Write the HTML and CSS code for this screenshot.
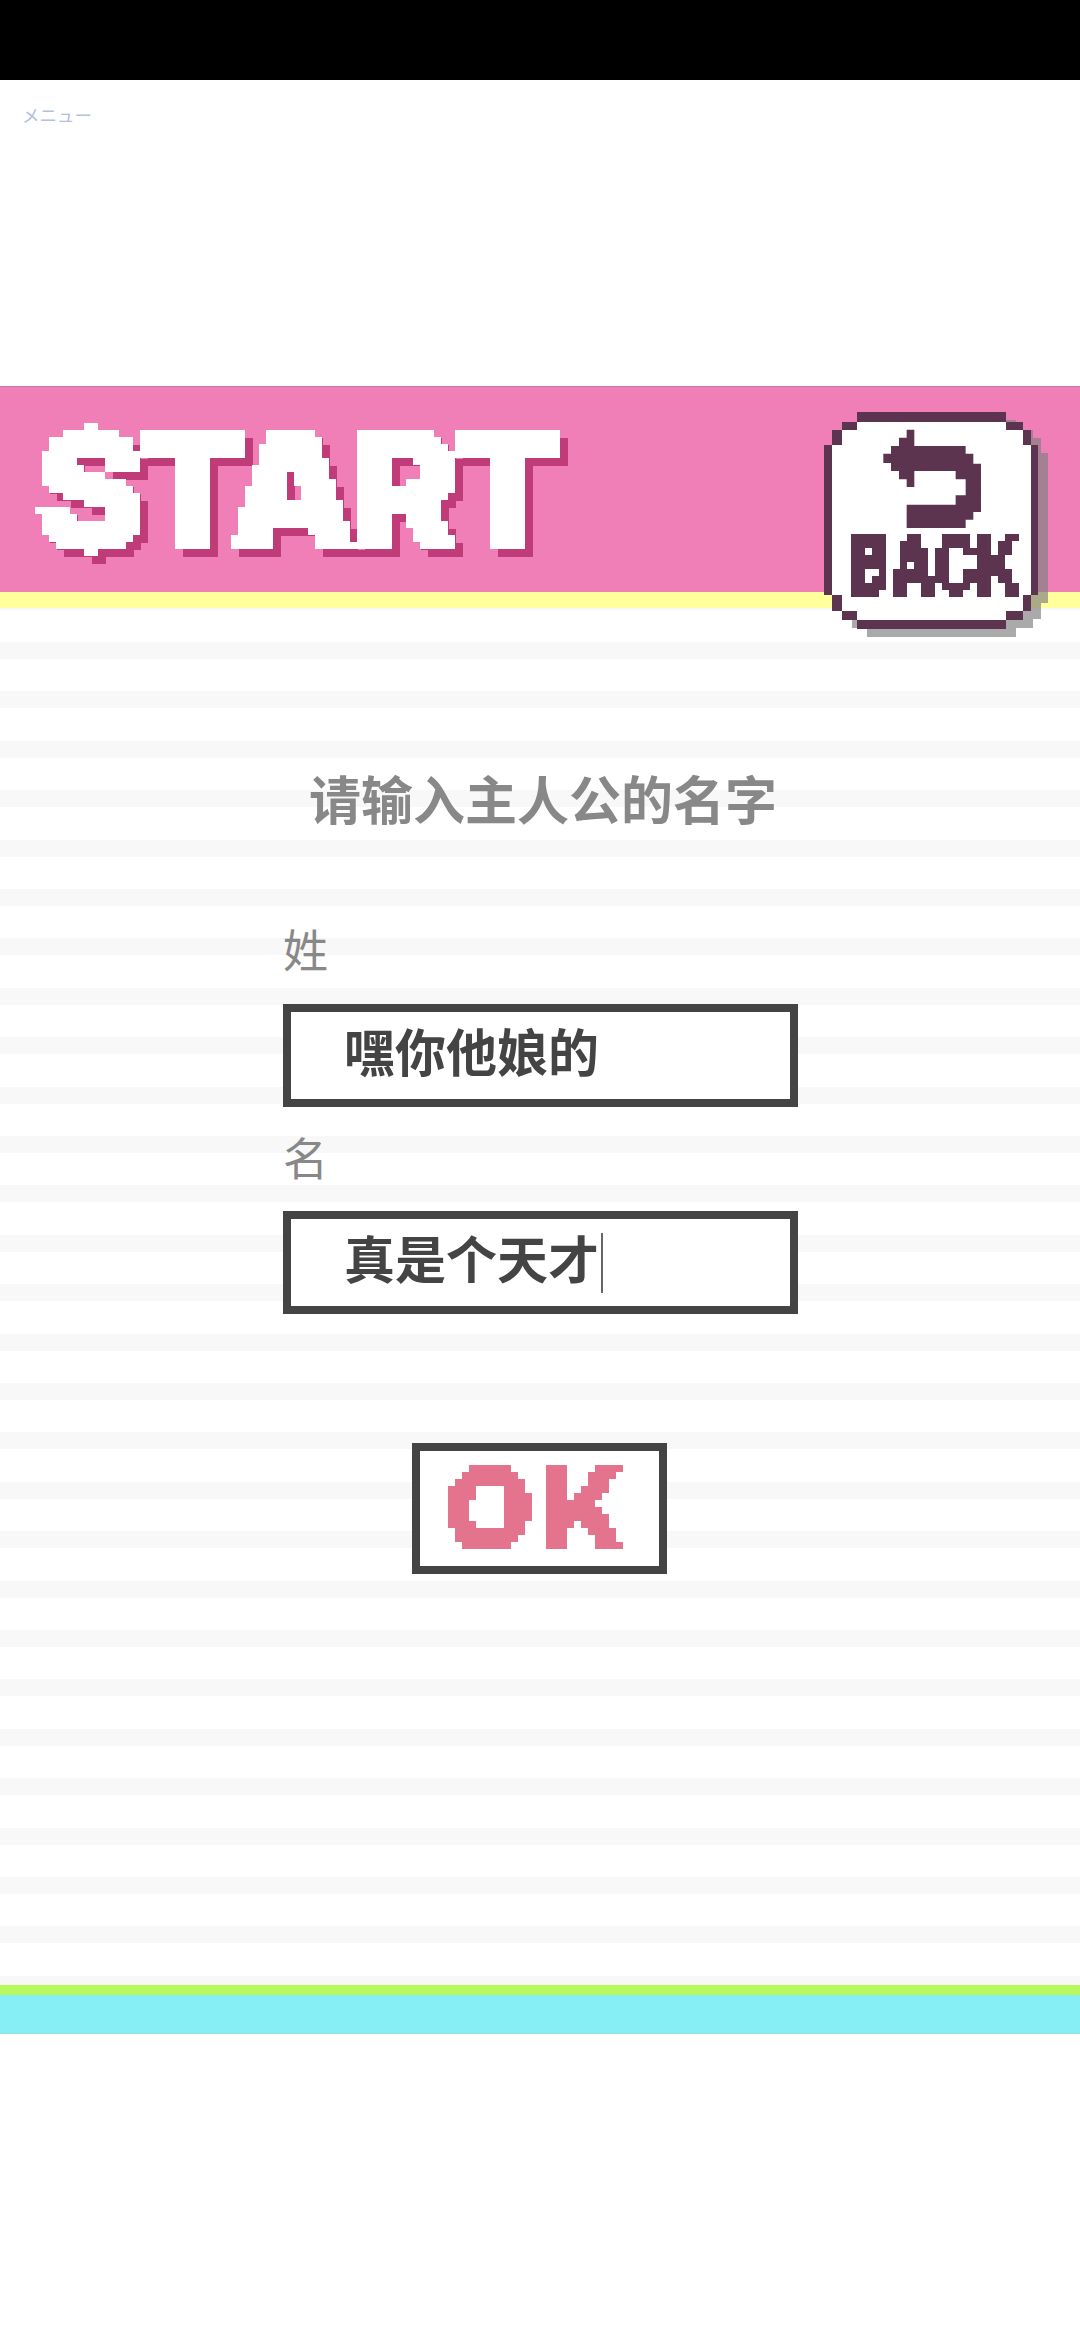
FILE: index.html
```html
<!DOCTYPE html>
<html lang="zh-CN">
<head>
  <meta charset="UTF-8">
  <meta name="viewport" content="width=device-width, initial-scale=1.0">
  <title>START</title>
  <link rel="stylesheet" href="styles.css">
</head>
<body>
  <svg class="filters" width="0" height="0" aria-hidden="true">
    <filter id="pixel7" x="0" y="0" width="100%" height="100%" color-interpolation-filters="sRGB">
      <feFlood x="3" y="3" width="1" height="1"/>
      <feComposite width="7" height="7"/>
      <feTile result="grid"/>
      <feComposite in="SourceGraphic" in2="grid" operator="in"/>
      <feMorphology operator="dilate" radius="3"/>
      <feComponentTransfer>
        <feFuncA type="discrete" tableValues="0 1"/>
      </feComponentTransfer>
    </filter>
  </svg>

  <div class="statusbar"></div>
  <div class="topnav"><a class="menu-link" href="#">メニュー</a></div>

  <div class="stage">
    <header class="banner">
      <div class="start-shadow"><div class="start-title">START</div></div>
      <a class="back-btn" href="#">
        <svg class="back-frame" width="226" height="226" viewBox="0 0 226 226">
          <path class="back-shadow" transform="translate(10 8)" d="M33 0H182V10H199V18H207V33H214V183H207V199H199V208H182V217H33V208H18V199H8V183H0V33H8V18H18V10H33Z"/>
          <path class="back-edge" d="M33 0H182V10H199V18H207V33H214V183H207V199H199V208H182V217H33V208H18V199H8V183H0V33H8V18H18V10H33Z"/>
          <path class="back-face" d="M33 10H182V18H199V33H207V183H199V199H182V208H33V199H18V183H8V33H18V18H33Z"/>
          <path class="back-edge" transform="scale(.3333) translate(-132 -95)" d="M380 148H403V197H557V220H580V250H603V395H580V418H557V443H380V373H527V345H557V297H527V272H403V320H380V297H357V272H333V248H310V220H333V197H357V172H380Z"/>
        </svg>
        <span class="back-label"><span class="back-text">BACK</span></span>
      </a>
    </header>
    <div class="stripe-yellow"></div>

    <main class="content">
      <h1 class="prompt">请输入主人公的名字</h1>
      <form class="name-form">
        <div class="field-label">姓</div>
        <div class="field-box">嘿你他娘的</div>
        <div class="field-label second">名</div>
        <div class="field-box">真是个天才<span class="caret"></span></div>
      </form>
      <button class="ok-btn" type="button"><span class="ok-label">OK</span></button>
    </main>

    <div class="stripe-green"></div>
    <div class="stripe-cyan"></div>
  </div>
</body>
</html>
```

FILE: styles.css
```css
* {
  box-sizing: border-box;
}

body {
  margin: 0;
  background: #fff;
  font-family: "Noto Sans CJK SC", "Liberation Sans", sans-serif;
}

.filters {
  display: block;
  height: 0;
}

.statusbar {
  height: 80px;
  background: #000;
}

.topnav {
  height: 306px;
  padding: 22px 0 0 22px;
}

.menu-link {
  font-family: "Noto Sans CJK JP", sans-serif;
  font-size: 17.5px;
  line-height: 26px;
  color: #b4c0dc;
  text-decoration: none;
}

.banner {
  position: relative;
  height: 206px;
  background: #f07fb8;
  border-top: 1px solid #c87aa0;
  padding: 8px 0 0 35px;
}

.start-shadow {
  width: 560px;
  filter: drop-shadow(8px 8px 0 #c03c78);
}

.start-title {
  height: 190px;
  font-family: Inter, "Liberation Sans", sans-serif;
  font-weight: 900;
  font-size: 165px;
  line-height: 190px;
  letter-spacing: -8px;
  color: #fff;
  -webkit-text-stroke: 4px #fff;
  filter: url(#pixel7);
}

.back-btn {
  position: absolute;
  left: 824px;
  top: 25px;
  width: 226px;
  height: 226px;
  z-index: 2;
  text-decoration: none;
}

.back-frame {
  display: block;
}

.back-shadow {
  fill: #808080;
  opacity: 0.67;
}

.back-edge {
  fill: #5c3450;
}

.back-face {
  fill: #fff;
}

.back-label {
  position: absolute;
  left: 27px;
  top: 108px;
  width: 176px;
  height: 90px;
  filter: url(#pixel7);
}

.back-text {
  display: block;
  width: 176px;
  font-family: Inter, "Liberation Sans", sans-serif;
  font-weight: 900;
  font-size: 54px;
  line-height: 90px;
  white-space: nowrap;
  color: #5c3450;
  transform: scale(1.08, 1.52);
  transform-origin: left center;
}

.stripe-yellow {
  height: 16px;
  background: #ffff9c;
}

.content {
  height: 1377px;
  padding-top: 160px;
  background: repeating-linear-gradient(#f8f8f8 0 1.6px, #fff 1.6px 34px, #f8f8f8 34px 49.4px);
}

.prompt {
  margin: 0 0 0 6px;
  font-size: 52px;
  line-height: 60px;
  font-weight: 700;
  color: #888;
  text-align: center;
}

.name-form {
  width: 515px;
  margin: 91px 0 0 283px;
}

.field-label {
  height: 60px;
  margin-bottom: 25px;
  font-size: 45px;
  line-height: 60px;
  font-weight: 400;
  color: #888;
}

.field-label.second {
  margin-top: 20px;
  margin-bottom: 24px;
}

.field-box {
  display: flex;
  align-items: center;
  height: 103px;
  padding: 0 0 12px 53px;
  border: 8px solid #444;
  background: #fff;
  font-size: 51px;
  font-weight: 700;
  color: #444;
}

.caret {
  width: 2px;
  height: 60px;
  margin: 12px 0 0 2px;
  background: #666;
}

.ok-btn {
  display: block;
  width: 255px;
  height: 131px;
  margin: 129px 0 0 412px;
  padding: 0;
  border: 8px solid #444;
  background: #fff;
}

.ok-label {
  display: block;
  height: 115px;
  font-family: Inter, "Liberation Sans", sans-serif;
  font-weight: 900;
  font-size: 118px;
  line-height: 115px;
  letter-spacing: 6px;
  color: #e4748e;
  filter: url(#pixel7);
}

.stripe-green {
  height: 10px;
  background: #b8f85c;
}

.stripe-cyan {
  height: 39px;
  background: #86eef5;
  border-bottom: 1px solid #9cdde0;
}
```
